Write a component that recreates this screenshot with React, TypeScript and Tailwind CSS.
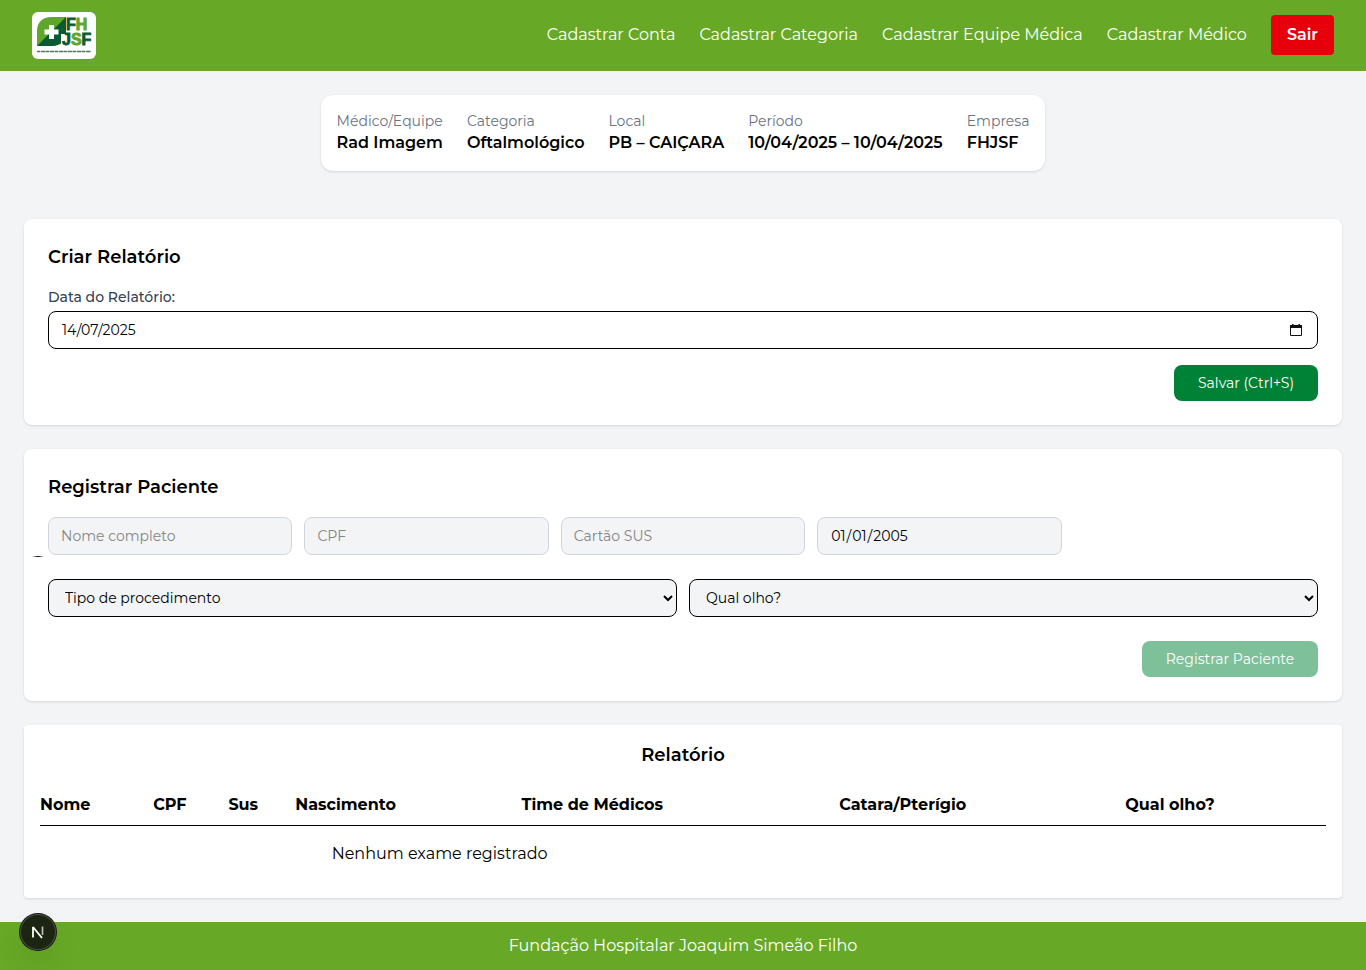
import React from "react";

const navLinks = ["Cadastrar Conta", "Cadastrar Categoria", "Cadastrar Equipe Médica", "Cadastrar Médico"];

const summary = [
  { label: "Médico/Equipe", value: "Rad Imagem" },
  { label: "Categoria", value: "Oftalmológico" },
  { label: "Local", value: "PB – CAIÇARA" },
  { label: "Período", value: "10/04/2025 – 10/04/2025" },
  { label: "Empresa", value: "FHJSF" },
];

const columns = [
  { title: "Nome", width: "w-[8.8%]" },
  { title: "CPF", width: "w-[5.85%]" },
  { title: "Sus", width: "w-[5.2%]" },
  { title: "Nascimento", width: "w-[17.6%]" },
  { title: "Time de Médicos", width: "w-[24.7%]" },
  { title: "Catara/Pterígio", width: "w-[22.25%]" },
  { title: "Qual olho?", width: "w-[15.6%]" },
];

function Logo() {
  return (
    <svg viewBox="0 0 64 47" className="h-[47px] w-16" role="img" aria-label="FHJSF">
      <rect width="64" height="47" rx="6" fill="#fff" />
      <path d="M5 34V19C5 10 11 5 19 5h15v15c0 9-6 14-14 14z" fill="#5fa62c" />
      <path d="M5 34 34 5v15c0 9-6 14-14 14z" fill="#0b5a33" />
      <path d="M17 13h5v4.500h4.500v5H22V27h-5v-4.500h-4.500v-5H17z" fill="#fff" />
      <path d="M29 22h5v12h-5z" fill="#fff" />
      <g fontFamily="Liberation Sans, Arial, sans-serif" fontWeight="700" fontSize="16" strokeWidth="0.9">
        <text x="34" y="18" fill="#0b5a33" stroke="#0b5a33">
          F<tspan fill="#5fa62c" stroke="#5fa62c">H</tspan>
        </text>
        <text x="30" y="33" fill="#0b5a33" stroke="#0b5a33">
          J<tspan fill="#5fa62c" stroke="#5fa62c">S</tspan>F
        </text>
      </g>
      <path d="M5 39.500h54" stroke="#4d7a62" strokeWidth="1.500" strokeDasharray="3 .6 5 .4" />
    </svg>
  );
}

function CalendarIcon() {
  return (
    <svg viewBox="0 0 12 13" className="h-[13px] w-3" aria-hidden="true">
      <path d="M.5 2.500h11v9H.5z" fill="none" stroke="#111" />
      <path d="M0 1h12v3H0zM2 0h1.500v2H2zM8.500 0H10v2H8.500z" fill="#111" />
    </svg>
  );
}

const patientField =
  "h-[38px] w-full min-w-0 rounded-lg border border-gray-300 bg-gray-100 px-3 text-[14px] leading-5 text-black placeholder:text-[#868686]";
const choiceField =
  "h-[38px] w-full min-w-0 rounded-lg border border-black bg-gray-100 px-3 text-[14px] leading-5 text-black";

export default function App() {
  return (
    <div className="flex min-h-screen flex-col bg-gray-100 font-['Montserrat','Inter',sans-serif] text-[16px] leading-6 text-black">
      <header className="flex items-start justify-between bg-[#67a926] px-8 py-3">
        <Logo />
        <nav className="mt-[3px] flex items-center gap-6 text-white">
          {navLinks.map((text) => (
            <a key={text} href="#">{text}</a>
          ))}
          <button type="button" className="h-10 rounded bg-[#e7000b] px-4 pb-px font-semibold">Sair</button>
        </nav>
      </header>

      <main className="flex flex-1 flex-col px-6 py-6">
        <dl className="mb-12 flex gap-6 self-center rounded-xl bg-white p-4 shadow-sm">
          {summary.map((item) => (
            <div key={item.label}>
              <dt className="text-[14px] leading-5 text-gray-500">{item.label}</dt>
              <dd className="font-semibold">{item.value}</dd>
            </div>
          ))}
        </dl>

        <section className="mb-6 rounded-lg bg-white p-6 shadow-sm">
          <h2 className="mb-4 text-[18px] leading-7 font-semibold">Criar Relatório</h2>
          <label htmlFor="report-date" className="mb-1 block text-[14px] leading-5 font-medium text-gray-700">Data do Relatório:</label>
          <div className="flex h-[38px] items-center rounded-lg border border-black pr-[15px] pl-[13px]">
            <input id="report-date" defaultValue="14/07/2025" className="min-w-0 flex-1 text-[14px] leading-5 outline-none" />
            <button type="button" aria-label="Abrir calendário"><CalendarIcon /></button>
          </div>
          <div className="mt-4 flex justify-end">
            <button type="button" className="h-9 w-36 rounded-lg bg-[#008236] text-[14px] leading-5 text-white">Salvar (Ctrl+S)</button>
          </div>
        </section>

        <section className="relative mb-6 rounded-lg bg-white p-6 shadow-sm">
          <span className="absolute top-[107px] left-2 h-px w-3 bg-linear-to-r from-transparent via-black to-transparent" aria-hidden="true" />
          <h2 className="mb-4 text-[18px] leading-7 font-semibold">Registrar Paciente</h2>
          <div className="grid grid-cols-5 gap-3">
            <input aria-label="Nome completo" placeholder="Nome completo" className={patientField} />
            <input aria-label="CPF" placeholder="CPF" className={patientField} />
            <input aria-label="Cartão SUS" placeholder="Cartão SUS" className={patientField} />
            <input type="date" disabled aria-label="Data de nascimento" defaultValue="2005-01-01" className={patientField} />
          </div>
          <div className="mt-6 grid grid-cols-2 gap-3">
            <select aria-label="Tipo de procedimento" className={choiceField}>
              <option>Tipo de procedimento</option>
            </select>
            <select aria-label="Qual olho?" className={choiceField}>
              <option>Qual olho?</option>
            </select>
          </div>
          <div className="mt-6 flex justify-end">
            <button type="button" disabled className="h-9 w-44 rounded-lg bg-[#008236] text-[14px] leading-5 text-white opacity-50">Registrar Paciente</button>
          </div>
        </section>

        <section className="rounded bg-white p-4 shadow-sm">
          <h2 className="mb-4 text-center text-[18px] leading-7 font-semibold">Relatório</h2>
          <table className="w-full table-fixed border-collapse">
            <thead>
              <tr className="border-b border-black">
                {columns.map((column) => (
                  <th key={column.title} className={`${column.width} py-2 text-left font-bold`}>{column.title}</th>
                ))}
              </tr>
            </thead>
            <tbody>
              <tr>
                <td colSpan={5} className="py-4 text-center">Nenhum exame registrado</td>
              </tr>
            </tbody>
          </table>
        </section>
      </main>

      <footer className="bg-[#67a926] py-3 text-center text-white">Fundação Hospitalar Joaquim Simeão Filho</footer>

      <button
        type="button"
        aria-label="Ferramentas"
        className="fixed bottom-5 left-5 flex size-9 items-center justify-center rounded-full bg-[#1b2511] shadow-[0_0_0_1px_#171717,inset_0_0_0_1px_#4a5043,0_16px_32px_-8px_rgba(0,0,0,0.24)]"
      >
        <svg viewBox="0 0 14 14" className="size-[14px]" fill="none" aria-hidden="true">
          <path d="M2 12.500V2l9 11" stroke="#fff" strokeWidth="1.800" strokeLinejoin="bevel" />
          <path d="M11.500 1.500v8.500" stroke="#b9bdb5" strokeWidth="1.700" />
        </svg>
      </button>
    </div>
  );
}
